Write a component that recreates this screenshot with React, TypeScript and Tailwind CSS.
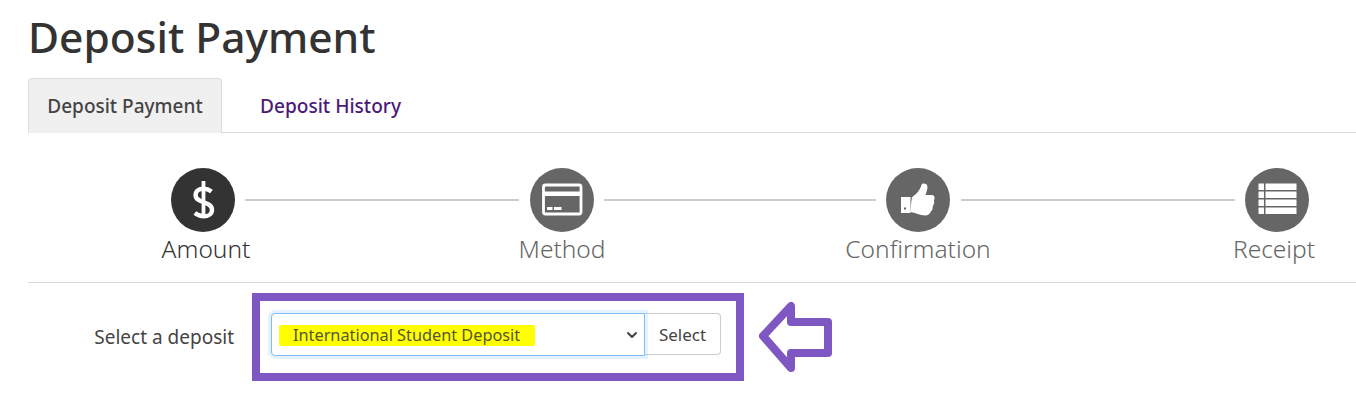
import { ChevronDown } from 'lucide-react';

const font = { fontFamily: '"Noto Sans", "Open Sans", sans-serif' };

function DollarIcon() {
  return (
    <svg viewBox="0 0 64 64" className="absolute inset-0 h-16 w-16" fill="none" stroke="#fff">
      <path d="M32.500 13v37" strokeWidth="3.800" />
      <path d="M40.500 23.500c-2.400-1.800-4.900-2.800-8-2.800-4.700 0-7.900 2.400-7.900 6.200 0 9 16.400 5.600 16.400 15 0 3.800-3.500 6.400-8.300 6.400-3.400 0-6.300-1.200-8.900-3.200" strokeWidth="4.400" />
    </svg>
  );
}

function CardIcon() {
  return (
    <svg viewBox="0 0 64 64" className="absolute inset-0 h-16 w-16" fill="none">
      <rect x="13.500" y="17" width="37.500" height="29" rx="2" stroke="#fff" strokeWidth="2.800" />
      <rect x="13.500" y="23.500" width="37.500" height="4.500" fill="#fff" />
      <rect x="17" y="39" width="5.500" height="3" fill="#fff" />
      <rect x="24" y="39" width="7.500" height="3" fill="#fff" />
    </svg>
  );
}

function ThumbIcon() {
  return (
    <svg viewBox="0 0 64 64" className="absolute inset-0 h-16 w-16">
      <rect x="15" y="29" width="9.500" height="16" fill="#fff" />
      <rect x="18" y="39.500" width="2" height="2" fill="#666" />
      <path
        d="M25.800 29.500 31 25c2-2.600 4-5.500 4.500-8.200.5-2 5-2 5.800 1 .7 2.700-.8 6.500-1.900 9.200h6.500c2.800 0 3.300 3.500 2 5.500.7 2 .2 4.400-1.200 5.700.2 2.400-.6 4.300-1.900 5.300-.6 2.400-2.600 3.900-5.800 3.900-5 0-9.500-2.900-14.700-3.400z"
        fill="#fff"
      />
    </svg>
  );
}

function ListIcon() {
  const rows = [15.5, 23.5, 31.5, 39.5];
  return (
    <svg viewBox="0 0 64 64" className="absolute inset-0 h-16 w-16" fill="#fff">
      {rows.map((y) => (
        <g key={y}>
          <rect x="13.500" y={y} width="5.500" height="6.500" />
          <rect x="20.500" y={y} width="31" height="6.500" />
        </g>
      ))}
    </svg>
  );
}

function Step({ label, active, icon, labelClass }: { label: string; active?: boolean; icon: React.ReactNode; labelClass?: string }) {
  return (
    <div className="flex w-16 shrink-0 flex-col items-center">
      <div className={`relative h-16 w-16 rounded-full ${active ? 'bg-[#333333]' : 'bg-[#666666]'}`}>{icon}</div>
      <div className={`whitespace-nowrap text-[24.500px] font-light leading-[34px] ${active ? 'text-[#333333]' : 'text-[#666666]'} ${labelClass ?? ''}`}>
        {label}
      </div>
    </div>
  );
}

function Connector({ className }: { className: string }) {
  return <div className={`mb-[35px] h-[2px] self-center bg-[#cccccc] ${className}`} />;
}

export default function App() {
  return (
    <div className="h-[403px] w-[1356px] overflow-hidden bg-white pl-[28px] text-[#333333]" style={font}>
      <h1 className="pt-[8px] text-[42.500px] font-medium leading-[57px] text-[#333333]">Deposit Payment</h1>

      <div className="mt-[13px] flex h-[55px] border-b border-[#d9d9d9]">
        <div className="flex h-[55px] w-[194px] items-center justify-center rounded-t border border-b-0 border-[#dddddd] bg-[#f0f0f0] text-[19px] font-medium text-[#444444]">
          Deposit Payment
        </div>
        <div className="flex h-[55px] items-center pl-[38px] pt-[2px] text-[19.100px] font-medium text-[#4b1a78]">Deposit History</div>
      </div>

      <div className="mt-[35px] flex h-[115px] items-start border-b border-[#d9d9d9] pl-[143px]">
        <div className="flex items-center">
          <Step label="Amount" active icon={<DollarIcon />} labelClass="ml-[6px]" />
          <Connector className="ml-[10px] mr-[11px] w-[274px]" />
          <Step label="Method" icon={<CardIcon />} />
          <Connector className="ml-[10px] mr-[10px] w-[272px]" />
          <Step label="Confirmation" icon={<ThumbIcon />} />
          <Connector className="ml-[11px] mr-[10px] w-[274px]" />
          <Step label="Receipt" icon={<ListIcon />} labelClass="mr-[6px]" />
        </div>
      </div>

      <div className="mt-[10px] flex items-start">
        <div className="w-[206px] pt-[31px] text-right text-[19px] leading-[26px] text-[#444444]">Select a deposit</div>
        <div className="ml-[18px] h-[88px] w-[492px] border-[8px] border-[#7e57c2] pl-[11px] pt-[12px]">
          <div className="flex h-[43px] w-[450px]">
            <div className="relative flex h-[43px] w-[374px] items-center rounded-l border border-[#80bdff] bg-white pl-[7px] shadow-[0_0_0_3px_rgba(128,189,255,0.2)]">
              <span className="mt-[1px] flex h-[21px] w-[256px] items-center whitespace-nowrap rounded-[2px] bg-[#ffff00] pl-[14px] text-[16.300px] text-[#555533]">
                International Student Deposit
              </span>
              <ChevronDown className="absolute right-[4px] top-[13px] h-4 w-4 text-[#444444]" strokeWidth={3} />
            </div>
            <div className="flex h-[42px] w-[76px] items-center justify-center rounded-r border border-l-0 border-[#cccccc] pt-[1px] text-[17px] text-[#444444]">
              Select
            </div>
          </div>
        </div>
        <svg viewBox="0 0 76 74" className="ml-[13px] mt-[6px] h-[74px] w-[76px]" fill="none" stroke="#7e57c2" strokeWidth="8" strokeLinejoin="round">
          <path d="M6 37 34 7v16h37v31H34v15z" />
        </svg>
      </div>
    </div>
  );
}
